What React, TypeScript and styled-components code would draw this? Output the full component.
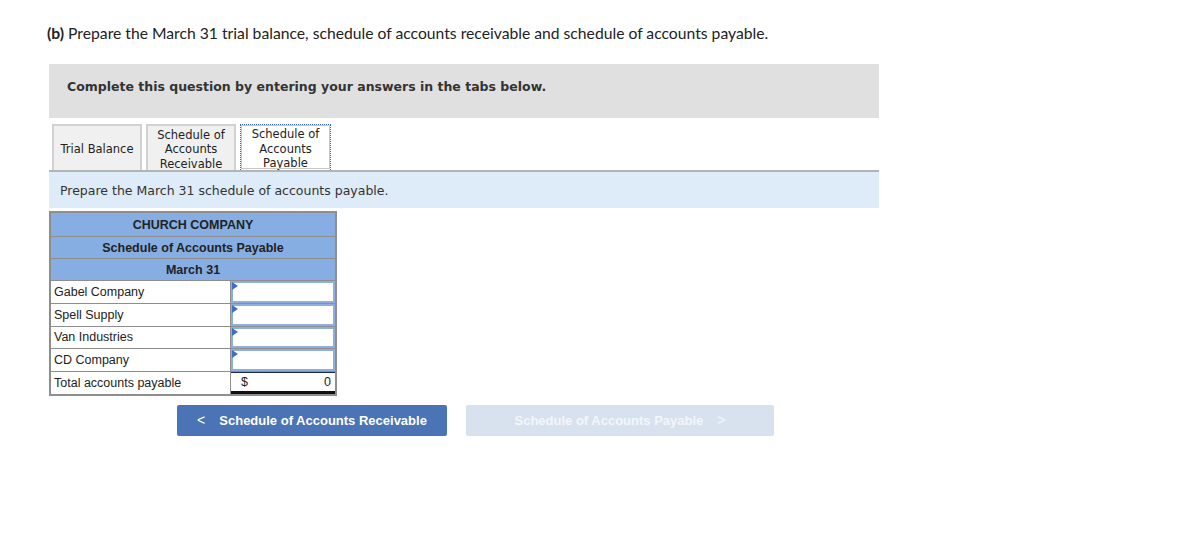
import React from 'react';
import styled, { createGlobalStyle } from 'styled-components';

const GlobalStyle = createGlobalStyle`
  body {
    margin: 0;
    background: #fff;
    font-family: "Liberation Sans", Arial, sans-serif;
  }
`;

const Page = styled.div`
  padding: 24px 0 0 47px;
  width: 834px;
`;

const Heading = styled.div`
  font-family: Lato, "Open Sans", sans-serif;
  font-size: 15.7px;
  color: #222;
  line-height: 18px;

  b {
    font-weight: 700;
  }
`;

const Instruction = styled.div`
  margin: 22px 0 0 2px;
  height: 54px;
  width: 830px;
  background: #e0e0e0;
  padding: 15px 0 0 18px;
  box-sizing: border-box;
  font-family: "DejaVu Sans", Verdana, sans-serif;
  font-weight: 700;
  font-size: 12.5px;
  line-height: 16px;
  color: #333;
`;

const Tabs = styled.div`
  display: flex;
  gap: 4px;
  margin: 6px 0 0 5px;
  height: 46px;
`;

const Tab = styled.div<{ active?: boolean; w: number }>`
  width: ${p => p.w}px;
  box-sizing: border-box;
  display: flex;
  align-items: center;
  justify-content: center;
  padding-top: 3px;
  text-align: center;
  font-family: "DejaVu Sans", Verdana, sans-serif;
  font-size: 11.5px;
  line-height: 14.5px;
  color: #222;
  background: ${p => (p.active ? '#fff' : '#f0f0f0')};
  border: ${p => (p.active ? '1px dotted #3a62b8' : '2px solid #d2d2d2')};
  border-bottom: none;
  ${p => p.active && 'outline: 1px solid #c8c8c8; outline-offset: -2px;'}
`;

const Strip = styled.div`
  margin-left: 2px;
  width: 830px;
  height: 38px;
  box-sizing: border-box;
  background: #deebf8;
  border-top: 2px solid #b4b4b4;
  display: flex;
  align-items: center;
  padding: 1px 0 0 11px;
  font-family: "DejaVu Sans", Verdana, sans-serif;
  font-size: 12.5px;
  color: #333;
`;

const Table = styled.div`
  margin: 3px 0 0 2px;
  width: 288px;
  border: 2px solid #8e8e8e;
  box-sizing: border-box;
  background: #8e8e8e;
  display: grid;
  grid-template-columns: 179px 1fr;
  row-gap: 1px;
`;

const HeadRow = styled.div<{ h: number }>`
  grid-column: 1 / span 2;
  height: ${p => p.h}px;
  background: #86aee2;
  display: flex;
  align-items: center;
  justify-content: center;
  font-weight: 700;
  font-size: 12.5px;
  color: #222;
`;

const Label = styled.div`
  height: 21.8px;
  background: #fff;
  display: flex;
  align-items: center;
  padding-left: 3px;
  font-size: 12.5px;
  color: #222;
`;

const InputCell = styled.div`
  position: relative;
  height: 21.8px;
  margin-left: 1px;
  background: #fff;
  box-sizing: border-box;
  border: 2px solid #8eaee0;

  &::before {
    content: '';
    position: absolute;
    top: -1px;
    left: -1px;
    border-top: 4px solid transparent;
    border-bottom: 4px solid transparent;
    border-left: 6px solid #3d6fc4;
  }
`;

const TotalCell = styled.div`
  height: 21.8px;
  margin-left: 1px;
  background: #fff;
  border-top: 1px solid #1b2b4a;
  border-bottom: 3px solid #111;
  box-sizing: border-box;
  display: flex;
  align-items: center;
  justify-content: space-between;
  padding: 0 4px 0 10px;
  font-size: 12.5px;
  color: #222;
`;

const Nav = styled.div`
  display: flex;
  gap: 19px;
  margin: 9px 0 0 130px;
`;

const NavButton = styled.div<{ disabled?: boolean; w: number }>`
  width: ${p => p.w}px;
  height: 31px;
  border-radius: 2px;
  background: ${p => (p.disabled ? '#d8e2ef' : '#4a74b5')};
  color: ${p => (p.disabled ? '#f3f6fa' : '#fff')};
  display: flex;
  align-items: center;
  justify-content: center;
  gap: 14px;
  font-weight: 700;
  font-size: 13px;
`;

const Chevron = styled.span`
  font-weight: 400;
  font-size: 14px;
`;

const rows = ['Gabel Company', 'Spell Supply', 'Van Industries', 'CD Company'];

export default function App() {
  return (
    <>
      <GlobalStyle />
      <Page>
        <Heading>
          <b>(b)</b> Prepare the March 31 trial balance, schedule of accounts receivable and schedule of accounts payable.
        </Heading>
        <Instruction>Complete this question by entering your answers in the tabs below.</Instruction>
        <Tabs>
          <Tab w={90}>Trial Balance</Tab>
          <Tab w={90}>
            Schedule of<br />Accounts<br />Receivable
          </Tab>
          <Tab w={91} active>
            Schedule of<br />Accounts<br />Payable
          </Tab>
        </Tabs>
        <Strip>Prepare the March 31 schedule of accounts payable.</Strip>
        <Table>
          <HeadRow h={23}>CHURCH COMPANY</HeadRow>
          <HeadRow h={21}>Schedule of Accounts Payable</HeadRow>
          <HeadRow h={21}>March 31</HeadRow>
          {rows.map(r => (
            <React.Fragment key={r}>
              <Label>{r}</Label>
              <InputCell />
            </React.Fragment>
          ))}
          <Label>Total accounts payable</Label>
          <TotalCell>
            <span>$</span>
            <span>0</span>
          </TotalCell>
        </Table>
        <Nav>
          <NavButton w={270}>
            <Chevron>&lt;</Chevron>
            <span>Schedule of Accounts Receivable</span>
          </NavButton>
          <NavButton w={308} disabled>
            <span>Schedule of Accounts Payable</span>
            <Chevron>&gt;</Chevron>
          </NavButton>
        </Nav>
      </Page>
    </>
  );
}
